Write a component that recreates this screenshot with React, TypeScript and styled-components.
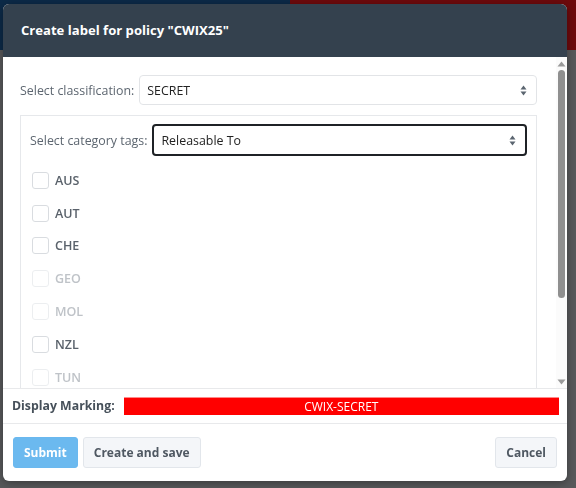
import React from 'react';
import styled, { createGlobalStyle } from 'styled-components';

const GlobalStyle = createGlobalStyle`
  html, body {
    margin: 0;
    padding: 0;
    width: 576px;
    height: 488px;
    overflow: hidden;
    background: #58595b;
    font-family: 'Open Sans', 'Noto Sans', Arial, sans-serif;
  }
`;

const Page = styled.div`
  width: 576px;
  height: 488px;
  background: #58595b;
  display: flex;
  flex-direction: column;
`;

const Banner = styled.div`
  height: 50px;
  display: grid;
  grid-template-columns: 290px 1fr;
`;

const BannerPart = styled.div<{ $tone: string }>`
  background: ${(p) => p.$tone};
`;

const Overlay = styled.div`
  position: fixed;
  inset: 0;
  display: flex;
  padding: 4px 9px 7px 3px;
`;

const Modal = styled.div`
  flex: 1;
  display: flex;
  flex-direction: column;
  background: #fff;
  border-radius: 6px;
  overflow: hidden;
  box-shadow: 0 2px 10px rgba(0, 0, 0, 0.35);
`;

const Header = styled.div`
  height: 53px;
  flex: none;
  background: #34414e;
  display: flex;
  align-items: center;
  padding: 0 17px 1px 18px;
  box-sizing: border-box;
`;

const Title = styled.h2`
  margin: 0;
  color: #fff;
  font-size: 13.1px;
  font-weight: 700;
`;

const BodyRow = styled.div`
  height: 331px;
  flex: none;
  display: flex;
`;

const ScrollArea = styled.div`
  flex: 1;
  overflow: hidden;
  padding: 18px 19px 0 17px;
  display: flex;
  flex-direction: column;
  gap: 10px;
`;

const FieldRow = styled.div`
  display: flex;
  align-items: center;
  gap: 5px;
`;

const FieldLabel = styled.span`
  font-size: 12.4px;
  color: #5d6670;
  white-space: nowrap;
`;

const SelectBox = styled.div<{ $focused?: boolean }>`
  flex: 1;
  height: ${(p) => (p.$focused ? 32 : 30)}px;
  box-sizing: border-box;
  border: ${(p) => (p.$focused ? '2px solid #1f2226' : '1px solid #e2e4e7')};
  border-radius: 4px;
  display: flex;
  align-items: center;
  justify-content: space-between;
  padding: 0 9px 0 7px;
  font-size: 12.4px;
  color: #222;
`;

const TagBox = styled.div`
  border: 1px solid #e6e8eb;
  border-bottom: none;
  padding: 8px 9px 0 9px;
  flex: 1;
`;

const TagList = styled.div`
  display: flex;
  flex-direction: column;
  margin-top: 8px;
  padding-left: 2px;
`;

const TagRow = styled.label<{ $disabled?: boolean }>`
  height: 32.8px;
  flex: none;
  display: flex;
  align-items: center;
  gap: 6px;
  font-size: 12.5px;
  font-weight: 600;
  color: ${(p) => (p.$disabled ? '#bfc3c8' : '#5a626b')};
`;

const Check = styled.span<{ $disabled?: boolean }>`
  width: 17px;
  height: 17px;
  box-sizing: border-box;
  border: 1px solid ${(p) => (p.$disabled ? '#eceef0' : '#d9dce0')};
  border-radius: 3px;
  background: #fff;
`;

const ScrollBar = styled.div`
  width: 11px;
  flex: none;
  display: flex;
  flex-direction: column;
  align-items: center;
  padding: 4px 0 3px;
  box-sizing: border-box;
  background: #fbfbfb;
`;

const Thumb = styled.div`
  width: 7px;
  height: 228px;
  margin-top: 3px;
  border-radius: 4px;
  background: #8f8f8f;
`;

const ScrollSpacer = styled.div`
  flex: 1;
`;

const MarkingRow = styled.div`
  height: 36px;
  flex: none;
  box-sizing: border-box;
  border-top: 1px solid #e8e9eb;
  border-bottom: 1px solid #e8e9eb;
  display: flex;
  align-items: center;
  padding: 0 8px 0 9px;
  gap: 9px;
`;

const MarkingLabel = styled.span`
  font-size: 12.3px;
  line-height: 18px;
  font-weight: 700;
  color: #46505a;
  white-space: nowrap;
`;

const MarkingBar = styled.div`
  flex: 1;
  height: 18px;
  background: #ff0000;
  border-top: 1px solid #ff8a8a;
  box-sizing: border-box;
  display: flex;
  align-items: center;
  justify-content: center;
  color: #fff;
  font-size: 12px;
  line-height: 16px;
`;

const Footer = styled.div`
  flex: 1;
  display: flex;
  align-items: center;
  padding: 0 10px;
  gap: 5px;
`;

const Button = styled.button<{ $variant?: 'primary' | 'plain' }>`
  height: 31px;
  box-sizing: border-box;
  padding: 0 10px;
  border-radius: 3px;
  font-family: inherit;
  font-size: 12px;
  font-weight: 700;
  border: 1px solid ${(p) => (p.$variant === 'primary' ? '#6ab8ef' : '#e2e6eb')};
  background: ${(p) => (p.$variant === 'primary' ? '#6bb9ef' : '#f4f6f9')};
  color: ${(p) => (p.$variant === 'primary' ? '#fff' : '#4f5862')};
`;

const Grow = styled.div`
  flex: 1;
`;

function UpDown() {
  return (
    <svg width="7" height="11" viewBox="0 0 7 11">
      <path d="M3.5 0.5 L6.5 4.5 L0.5 4.5 Z" fill="#5b6570" />
      <path d="M3.5 10.5 L6.5 6.5 L0.5 6.5 Z" fill="#5b6570" />
    </svg>
  );
}

function Arrow({ up }: { up?: boolean }) {
  return (
    <svg width="9" height="6" viewBox="0 0 9 6">
      <path d={up ? 'M4.5 0.5 L8.5 5.5 L0.5 5.5 Z' : 'M4.5 5.5 L8.5 0.5 L0.5 0.5 Z'} fill="#9a9a9a" />
    </svg>
  );
}

const tags = [
  { code: 'AUS', disabled: false },
  { code: 'AUT', disabled: false },
  { code: 'CHE', disabled: false },
  { code: 'GEO', disabled: true },
  { code: 'MOL', disabled: true },
  { code: 'NZL', disabled: false },
  { code: 'TUN', disabled: true },
];

export default function App() {
  return (
    <>
      <GlobalStyle />
      <Page>
        <Banner>
          <BannerPart $tone="#0c2a48" />
          <BannerPart $tone="#6e0a0c" />
        </Banner>
      </Page>
      <Overlay>
        <Modal>
          <Header>
            <Title>Create label for policy "CWIX25"</Title>
          </Header>
          <BodyRow>
            <ScrollArea>
              <FieldRow>
                <FieldLabel>Select classification:</FieldLabel>
                <SelectBox>
                  SECRET
                  <UpDown />
                </SelectBox>
              </FieldRow>
              <TagBox>
                <FieldRow>
                  <FieldLabel>Select category tags:</FieldLabel>
                  <SelectBox $focused>
                    Releasable To
                    <UpDown />
                  </SelectBox>
                </FieldRow>
                <TagList>
                  {tags.map((t) => (
                    <TagRow key={t.code} $disabled={t.disabled}>
                      <Check $disabled={t.disabled} />
                      {t.code}
                    </TagRow>
                  ))}
                </TagList>
              </TagBox>
            </ScrollArea>
            <ScrollBar>
              <Arrow up />
              <Thumb />
              <ScrollSpacer />
              <Arrow />
            </ScrollBar>
          </BodyRow>
          <MarkingRow>
            <MarkingLabel>Display Marking:</MarkingLabel>
            <MarkingBar>CWIX-SECRET</MarkingBar>
          </MarkingRow>
          <Footer>
            <Button $variant="primary">Submit</Button>
            <Button>Create and save</Button>
            <Grow />
            <Button>Cancel</Button>
          </Footer>
        </Modal>
      </Overlay>
    </>
  );
}
